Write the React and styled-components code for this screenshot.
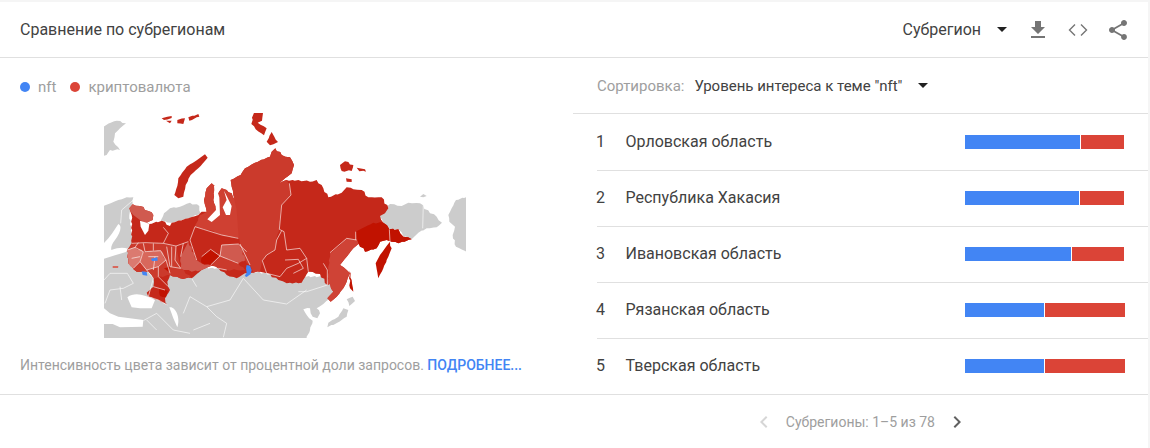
import React from 'react';
import styled, { createGlobalStyle } from 'styled-components';

const rows = [
  { rank: 1, name: 'Орловская область', blue: 115, red: 43 },
  { rank: 2, name: 'Республика Хакасия', blue: 114, red: 44 },
  { rank: 3, name: 'Ивановская область', blue: 106, red: 52 },
  { rank: 4, name: 'Рязанская область', blue: 79, red: 80 },
  { rank: 5, name: 'Тверская область', blue: 79, red: 80 },
];

// map shapes are traced in a 3x grid, see the viewBox in RegionMap
const land = [
  'M20 325L62 310L85 300L110 292L130 292L125 320L118 345L125 400L130 440L200 480L300 500L450 510L600 530L700 530L722 552L735 572L722 592L700 612L680 625L690 640L682 655L668 650L660 625L640 628L650 645L668 662L660 690L640 735L20 735Z',
  'M868 350L885 325L900 312L935 318L955 308L990 310L1020 340L1040 350L1056 368L1040 382L1010 385L985 398L965 418L940 408L925 388L898 388L880 370Z',
  'M1150 285L1098 300L1085 325L1075 345L1078 365L1095 380L1088 405L1098 440L1150 465Z',
  'M20 90L62 68L80 62L108 70L90 85L75 100L70 125L90 150L60 150L50 165L20 170Z',
  'M212 362L222 340L240 325L270 320L300 308L328 318L332 340L295 355L245 368Z',
  'M712 682L715 668L745 650L760 625L775 630L770 650L742 668Z',
  'M770 598L788 590L795 603L778 618Z',
  'M990 290L1000 282L1010 288L1000 292Z',
];

const water = [
  'M30 440C55 420 70 395 85 372C98 378 90 400 75 420C66 432 62 440 64 450C85 442 100 442 114 446L108 456L75 466L30 480Z',
  'M112 592C135 575 165 585 195 600L185 625L150 625L125 622Z',
  'M30 615L60 640L85 650L160 660L158 680L90 682L68 672L30 672Z',
  'M238 622C255 618 272 650 262 682L250 655Z',
];

const silhouette = 'M118 325L128 313L150 318L175 333L190 345L188 360L170 368L178 372L215 362L240 378L245 368L295 355L325 345L335 335L350 335L342 300L350 265L365 250L374 258L370 300L378 320L385 280L395 265L410 270L425 280L440 312L430 285L425 260L422 240L452 225L465 205L495 188L540 170L545 155L556 145L575 165L600 172L612 195L605 220L585 235L568 250L590 240L597 242L625 240L660 245L680 240L700 265L715 292L755 278L770 262L790 268L815 270L835 292L875 292L895 325L885 340L870 348L880 368L898 388L925 388L940 410L965 418L925 430L905 425L890 420L870 425L860 445L825 455L808 430L790 445L770 470L750 495L770 510L780 520L770 545L760 565L740 590L722 605L712 595L730 575L720 552L712 555L690 522L655 515L635 548L590 550L565 540L530 520L510 515L490 518L465 520L440 535L410 525L385 505L365 497L335 510L305 535L270 535L240 525L232 545L240 570L225 595L232 615L205 600L175 590L170 578L190 560L190 535L175 515L140 515L115 490L112 450L125 430L125 345Z';

const regions = [
  { fill: '#cb3a2c', d: 'M125 430L220 430L258 438L272 505L305 535L270 535L240 525L190 535L175 515L140 515L115 490L112 450Z' },
  { fill: '#db7a70', d: 'M112 450L135 442L160 455L150 485L130 505L115 490Z' },
  { fill: '#d8685c', d: 'M160 455L212 452L228 480L205 500L170 510L150 485Z' },
  { fill: '#d05a4f', d: 'M295 425L320 480L335 490L365 497L335 510L305 515L272 505L272 470Z' },
  { fill: '#d05a4f', d: 'M118 325L128 313L150 318L175 333L190 345L188 360L170 368L150 360L130 345L122 335Z' },
  { fill: '#cf4032', d: 'M315 380L330 345L350 335L342 300L350 265L365 250L374 258L370 300L378 320L385 280L395 265L410 270L425 280L440 312L445 360L450 405L445 415L395 405L360 390L340 388Z' },
  { fill: '#c11200', d: 'M335 470L362 448L388 468L362 495L335 490Z' },
  { fill: '#d05a4f', d: 'M395 435L445 432L470 455L472 478L445 490L415 478L390 468Z' },
  { fill: '#cb3a2c', d: 'M362 495L390 468L415 478L445 490L465 510L440 510L410 510L385 505Z' },
  { fill: '#cb3a2c', d: 'M422 240L452 225L465 205L495 188L540 170L545 155L556 145L575 165L600 172L612 195L605 220L585 235L568 250L590 240L598 255L603 285L575 315L570 340L568 385L560 415L555 450L530 465L517 480L510 515L490 518L480 495L465 480L450 432L445 400L440 330L430 285L425 260Z' },
  { fill: '#cf4336', d: 'M770 415L800 420L808 430L790 445L770 470L750 495L770 510L780 520L770 545L760 565L740 590L722 605L712 595L730 575L720 552L712 555L715 510L720 460L745 440Z' },
  { fill: '#c11200', d: 'M797 395L850 368L880 368L898 388L925 388L940 410L965 418L925 430L905 425L890 420L870 425L860 445L825 455L805 430Z' },
  { fill: '#c11200', d: 'M900 425L905 445L895 470L880 505L865 535L857 490L870 465L885 445Z' },
  { fill: '#c11200', d: 'M778 512L785 540L790 575L780 565Z' },
  { fill: '#c11200', d: 'M208 565L234 572L228 592L210 588Z' },
  { fill: '#c11200', d: 'M222 505L240 500L235 515Z' },
  { fill: '#d8685c', d: 'M68 498L85 498L84 504L68 504Z' },
  { fill: '#c5281a', d: 'M253 285L262 258L265 235L290 200L318 182L345 163L353 173L332 198L302 225L287 255L280 290L265 295Z' },
  { fill: '#c5281a', d: 'M492 30L520 30L516 62L503 68L530 85L522 106L497 88L484 72Z' },
  { fill: '#c5281a', d: 'M545 96L553 110L564 126L540 136L530 125Z' },
  { fill: '#c5281a', d: 'M750 195L765 184L790 195L785 213L755 213Z' },
  { fill: '#c5281a', d: 'M800 203L825 208L828 215L808 214Z' },
  { fill: '#c5281a', d: 'M768 235L785 238L785 246L770 245Z' },
  { fill: '#c5281a', d: 'M215 55L232 50L245 48L245 54L222 60ZM228 62L245 62L240 70ZM262 60L285 55L280 72L262 70ZM295 52L325 42L328 50L298 62Z' },
];

const seas = [
  'M150 362L170 368L178 372L175 392L165 405L152 380Z',
  'M372 258L378 330L352 358L365 366L390 345L388 292L376 258Z',
  'M402 272L425 318L420 345L408 345L398 322L410 300Z',
];

const borders = [
  'M598 250L603 285L575 315L568 388L582 395L590 450L630 445L650 475',
  'M575 392L560 420L555 450L530 465L517 482L530 520L570 530L590 505L625 490L650 475',
  'M585 480L625 478L640 505L610 520M650 475L655 515',
  'M700 490L712 510L712 555M720 458L770 415L800 420',
  'M797 395L797 420M898 388L900 425',
  'M315 380L340 388L395 405L445 415',
  'M315 380L300 420L320 480M395 435L390 468L362 448L335 470M362 495L390 468L415 478L445 490',
  'M395 435L445 432L470 455M410 510L385 505M450 432L480 495',
  'M125 430L165 428L220 430L258 438L295 425',
  'M220 382L235 400L220 430M160 430L165 455L212 452L228 480',
  'M112 450L135 442L160 455L150 485L130 505',
  'M150 485L170 510L205 500L228 480L240 520',
  'M258 438L255 480L272 505M230 440L240 500L272 505',
  'M135 442L145 428M190 452L190 430M170 510L190 535L175 590M205 500L205 530L235 560',
  'M175 470L205 470M195 470L190 510M125 475L150 470M245 440L245 500M280 430L272 470',
  'M175 590L205 600L232 615M190 560L225 570',
  'M460 535L520 600L590 612L650 570M460 535L420 600L350 620L300 590L280 640',
  'M350 620L380 650L410 670L400 712M310 690L360 670M160 662L200 640L250 690L300 700',
  'M60 570L100 565L130 550L112 520L60 520L42 540M60 570L45 610M90 560L95 600M130 300L95 330L92 370',
  'M305 535L320 560M712 555L650 575L625 575M200 690L170 660M1000 312L998 385',
];

// breaks the long straight edges so the coast doesn't look cut out with scissors
function roughen(d) {
  return d.split('Z').filter(Boolean).map(shape => {
    const pts = shape.replace('M', '').split('L').map(p => p.trim().split(' ').map(Number));
    const out = [];
    pts.forEach((p, i) => {
      const next = pts[(i + 1) % pts.length];
      const steps = Math.floor(Math.hypot(next[0] - p[0], next[1] - p[1]) / 9);
      out.push(p.join(' '));
      for (let s = 1; s < steps; s++) {
        const t = s / steps;
        const wobble = Math.sin((p[0] + s) * 12.9 + (p[1] + s) * 78.2) * 2.2;
        const x = p[0] + (next[0] - p[0]) * t + wobble;
        const y = p[1] + (next[1] - p[1]) * t - wobble;
        out.push(x.toFixed(1) + ' ' + y.toFixed(1));
      }
    });
    return 'M' + out.join('L') + 'Z';
  }).join('');
}

const GlobalStyle = createGlobalStyle`
  html, body {
    margin: 0;
    background: #f5f5f5;
  }
  body {
    font-family: Roboto, "Liberation Sans", sans-serif;
  }
`;

const Card = styled.div`
  width: 1148px;
  height: 446px;
  margin-top: 2px;
  background: #fff;
  display: flex;
  flex-direction: column;
`;

const Header = styled.div`
  height: 55px;
  flex: none;
  display: flex;
  align-items: center;
  padding: 0 10px 0 20px;
  border-bottom: 1px solid #e0e0e0;
`;

const Title = styled.div`
  flex: 1;
  font-size: 16px;
  color: #424242;
`;

const HeaderSelect = styled.div`
  display: flex;
  align-items: center;
  font-size: 16px;
  color: #424242;
  margin-right: 11px;
`;

const Arrow = styled.span`
  width: 0;
  height: 0;
  margin-left: 16px;
  border-left: 5px solid transparent;
  border-right: 5px solid transparent;
  border-top: 5px solid #212121;
`;

const IconButton = styled.div`
  width: 40px;
  height: 24px;
  display: flex;
  align-items: center;
  justify-content: center;
  color: #757575;
`;

const Body = styled.div`
  flex: 1;
  display: grid;
  grid-template-columns: 573px 1fr;
  border-bottom: 1px solid #e0e0e0;
`;

const LeftPanel = styled.div`
  display: flex;
  flex-direction: column;
  padding: 20px 0 0 20px;
`;

const Legend = styled.div`
  display: flex;
  align-items: center;
  height: 18px;
  font-size: 15px;
  color: #9e9e9e;
`;

const Dot = styled.span`
  width: 10px;
  height: 10px;
  border-radius: 50%;
  background: ${props => props.color};
  margin: ${props => (props.first ? '0 8px 0 0' : '0 8px 0 14px')};
`;

const MapWrap = styled.div`
  margin: 17px 0 0 84px;
  width: 362px;
  height: 225px;
  overflow: hidden;
`;

const MapSvg = styled.svg`
  display: block;
`;

const Note = styled.div`
  margin-top: 19px;
  font-size: 14px;
  color: #9e9e9e;
`;

const More = styled.span`
  font-weight: 500;
  color: #4285f4;
`;

const RightPanel = styled.div`
  display: flex;
  flex-direction: column;
`;

const SortBar = styled.div`
  height: 55px;
  flex: none;
  display: flex;
  align-items: center;
  padding-left: 24px;
  border-bottom: 1px solid #e0e0e0;
  font-size: 15px;
`;

const SortLabel = styled.span`
  color: #9e9e9e;
  margin-right: 10px;
`;

const SortValue = styled.span`
  color: #424242;
`;

const Row = styled.div`
  height: 55px;
  padding-top: ${props => (props.first ? 1 : 0)}px;
  margin-left: 24px;
  display: flex;
  align-items: center;
  font-size: 16px;
  color: #424242;
  border-bottom: ${props => (props.last ? 'none' : '1px solid #e0e0e0')};
`;

const Rank = styled.span`
  width: 29.5px;
  margin: 0 0 2px -1px;
`;

const RowName = styled.span`
  flex: 1;
  margin-bottom: 2px;
`;

const Bar = styled.div`
  display: flex;
  flex: none;
  gap: 1px;
  width: 159px;
  height: 14px;
  margin: 0 24px 1px 0;
`;

const Segment = styled.div`
  flex: none;
  height: 100%;
  background: ${props => props.color};
`;

const Footer = styled.div`
  flex: 1;
  display: flex;
  align-items: center;
  justify-content: flex-end;
  padding-right: 179px;
  font-size: 14px;
  color: #9e9e9e;
`;

const PagerText = styled.span`
  margin: 0 10px;
`;

const Chevron = styled.svg`
  display: block;
  fill: ${props => props.color};
`;

function RegionMap() {
  return (
    <MapSvg width="362" height="225" viewBox="42 39 1086 675">
      {land.map(d => <path key={d} d={roughen(d)} fill="#cccccc" />)}
      {water.map(d => <path key={d} d={d} fill="#ffffff" />)}
      <path d={roughen(silhouette)} fill="#c5281a" />
      {regions.map(r => <path key={r.d} d={roughen(r.d)} fill={r.fill} />)}
      {seas.map(d => <path key={d} d={d} fill="#ffffff" />)}
      {borders.map(d => <path key={d} d={d} fill="none" stroke="#fff" strokeOpacity="0.7" strokeWidth="2.6" />)}
      <path d="M183 476L202 472L203 482L186 483Z" fill="#4285f4" />
      <path d="M155 514L170 516L172 527L158 525Z" fill="#4285f4" />
      <path d="M470 495L480 497L485 510L482 522L470 531L464 528L470 518L468 505Z" fill="#4285f4" />
    </MapSvg>
  );
}

export default function App() {
  return (
    <>
      <GlobalStyle />
      <Card>
        <Header>
          <Title>Сравнение по субрегионам</Title>
          <HeaderSelect>
            Субрегион
            <Arrow />
          </HeaderSelect>
          <IconButton>
            <svg width="24" height="24" viewBox="0 0 24 24" fill="currentColor">
              <path d="M19 9h-4V3H9v6H5l7 7 7-7zM5 18v2h14v-2H5z" />
            </svg>
          </IconButton>
          <IconButton>
            <svg width="24" height="24" viewBox="0 0 24 24" fill="none" stroke="currentColor" strokeWidth="1.4">
              <path d="M9 6.5L3.5 12L9 17.5M15 6.5L20.5 12L15 17.5" />
            </svg>
          </IconButton>
          <IconButton>
            <svg width="24" height="24" viewBox="0 0 24 24" fill="currentColor">
              <path d="M18 16.08c-.76 0-1.44.3-1.96.77L8.91 12.7c.05-.23.09-.46.09-.7s-.04-.47-.09-.7l7.05-4.11c.54.5 1.25.81 2.04.81 1.66 0 3-1.34 3-3s-1.34-3-3-3-3 1.34-3 3c0 .24.04.47.09.7L8.04 9.81C7.5 9.31 6.79 9 6 9c-1.66 0-3 1.34-3 3s1.34 3 3 3c.79 0 1.5-.31 2.04-.81l7.12 4.16c-.05.21-.08.43-.08.65 0 1.61 1.31 2.92 2.92 2.92s2.92-1.31 2.92-2.92-1.31-2.92-2.92-2.92z" />
            </svg>
          </IconButton>
        </Header>
        <Body>
          <LeftPanel>
            <Legend>
              <Dot first color="#4285f4" />
              nft
              <Dot color="#db4437" />
              криптовалюта
            </Legend>
            <MapWrap>
              <RegionMap />
            </MapWrap>
            <Note>
              Интенсивность цвета зависит от процентной доли запросов. <More>ПОДРОБНЕЕ...</More>
            </Note>
          </LeftPanel>
          <RightPanel>
            <SortBar>
              <SortLabel>Сортировка:</SortLabel>
              <SortValue>Уровень интереса к теме "nft"</SortValue>
              <Arrow />
            </SortBar>
            {rows.map((row, i) => (
              <Row key={row.rank} first={i === 0} last={i === rows.length - 1}>
                <Rank>{row.rank}</Rank>
                <RowName>{row.name}</RowName>
                <Bar>
                  <Segment color="#4285f4" style={{ width: row.blue }} />
                  <Segment color="#db4437" style={{ width: row.red }} />
                </Bar>
              </Row>
            ))}
          </RightPanel>
        </Body>
        <Footer>
          <Chevron width="24" height="24" viewBox="0 0 24 24" color="#d6d6d6">
            <path d="M15.41 7.41L14 6l-6 6 6 6 1.41-1.41L10.83 12z" />
          </Chevron>
          <PagerText>Субрегионы: 1–5 из 78</PagerText>
          <Chevron width="24" height="24" viewBox="0 0 24 24" color="#616161">
            <path d="M10 6L8.59 7.41 13.17 12l-4.58 4.59L10 18l6-6z" />
          </Chevron>
        </Footer>
      </Card>
    </>
  );
}
